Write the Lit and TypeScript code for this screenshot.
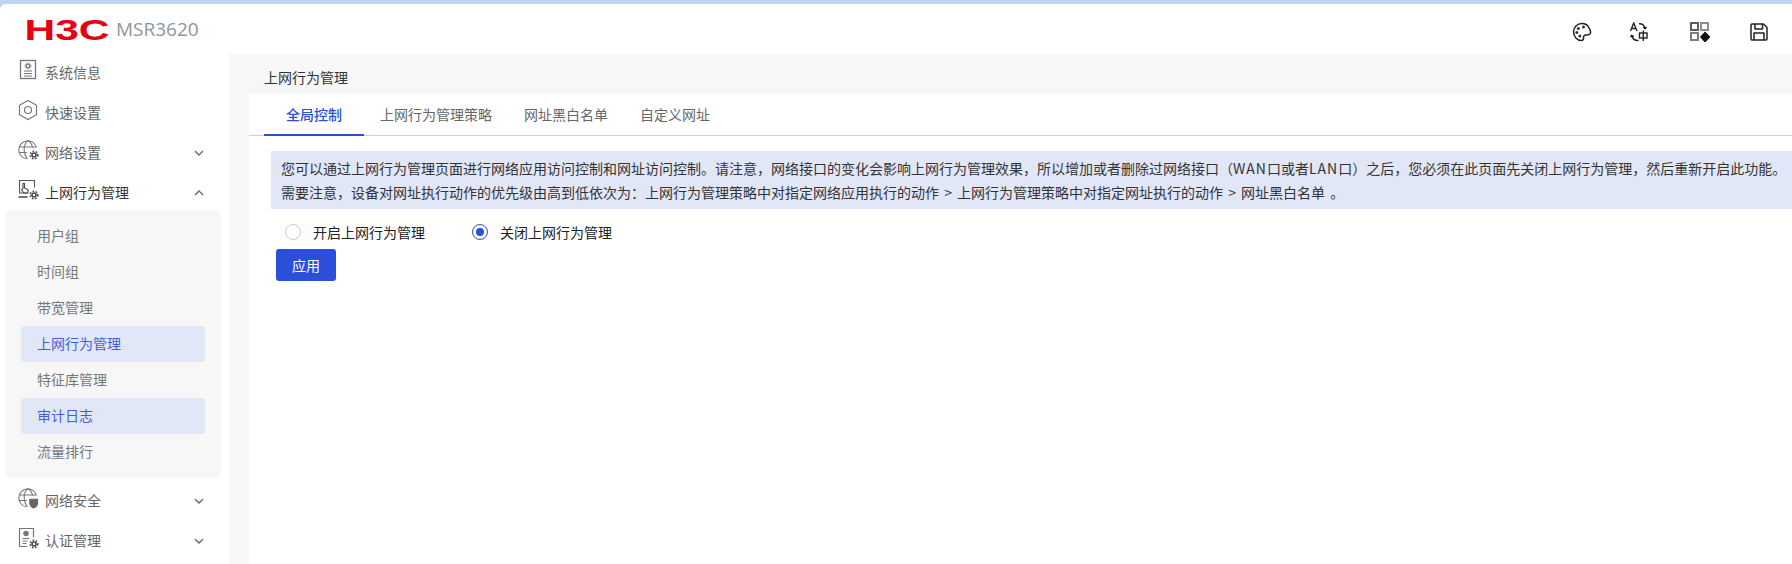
import { LitElement, html, css, svg } from "lit";
import { customElement } from "lit/decorators.js";

const gear = (x: number, y: number, r = 3.4) => svg`
  <circle cx=${x} cy=${y} r=${r} fill="none" stroke="#444" stroke-width="1.6"/>
  <circle cx=${x} cy=${y} r=${r + 1.8} fill="none" stroke="#444" stroke-width="1.5" stroke-dasharray="1.6 1.6"/>
`;

const icons: Record<string, unknown> = {
  info: svg`<svg class="ico" viewBox="0 0 22 22" fill="none" stroke="#777" stroke-width="1.3">
    <rect x="3.5" y="1.5" width="15" height="18"/>
    <circle cx="11" cy="7" r="1.8"/><circle cx="11" cy="7" r="3" stroke-width="1" stroke-dasharray="1.2 1.2"/>
    <path d="M7 12h8M7 14.5h8M7 17h8" stroke-width="1"/></svg>`,
  hex: svg`<svg class="ico" viewBox="0 0 22 22" fill="none" stroke="#777" stroke-width="1.2">
    <path d="M11 1.500l8.500 4.800v9.400L11 20.500l-8.500-4.800V6.300z"/><circle cx="11" cy="11" r="3.500"/></svg>`,
  globe: svg`<svg class="ico" viewBox="0 0 22 22" fill="none" stroke="#777" stroke-width="1.1">
    <path d="M19.500 8.500A9 9 0 1 0 9.500 19.800"/><path d="M11 1.600c-5 4-5 13 -.5 18M11 1.600c2.800 2 4.200 4.500 4.500 7"/><path d="M2 8h17M2 13.500h8"/>
    ${gear(17, 16, 2)}</svg>`,
  hand: svg`<svg class="ico" viewBox="0 0 22 22" fill="none" stroke="#444" stroke-width="1.1">
    <path d="M10 14H2.500V1.500h15v7" stroke="#555"/><path d="M1.500 18h9" stroke-width="1.300"/>
    <path d="M6 4.500v5l-1.500 1.500 2.500 3h4v-3.500l-3.500-1.500v-4.500z"/>
    ${gear(17, 16, 2)}</svg>`,
  shield: svg`<svg class="ico" viewBox="0 0 22 22" fill="none" stroke="#777" stroke-width="1.1">
    <path d="M19.500 8.500A9 9 0 1 0 9.500 19.800"/><path d="M11 1.600c-5 4-5 13 -.5 18M11 1.600c2.800 2 4.200 4.500 4.500 7"/><path d="M2 8h17M2 13.500h8"/>
    <path d="M12.800 12.200h7.700v4c0 2.500-2 4-3.850 4.800-1.850-.8-3.850-2.300-3.850-4.800z" fill="#666" stroke="#666"/></svg>`,
  cert: svg`<svg class="ico" viewBox="0 0 22 22" fill="none" stroke="#777" stroke-width="1.200">
    <path d="M10 19.500H2.500V1.500h14v9"/><circle cx="9" cy="6.500" r="2.200" fill="#777"/>
    <path d="M5.500 11.500h7M5.500 14h5M5.500 16.500h4" stroke-width="1"/>
    ${gear(17, 17, 2)}</svg>`,
  palette: svg`<svg class="tool" viewBox="0 0 20 20" fill="none" stroke="#222" stroke-width="1.5">
    <path d="M10 1.500c-5 0-8.500 3.700-8.500 8.300 0 4.700 3.800 8.700 7.700 8.700 2 0 2.400-1.200 2.300-2.400-.2-1.700.6-3.200 2.400-3.200 1.700 0 3.300.3 4.300-1.200.8-1.200.3-3.500-1.300-6.100C15.500 3 13 1.500 10 1.500z"/>
    <circle cx="6.300" cy="6.500" r="1.500" fill="#333" stroke="none"/><circle cx="11.500" cy="5" r="1.500" fill="#333" stroke="none"/><circle cx="4.800" cy="10.500" r="1.500" fill="#333" stroke="none"/><circle cx="7.800" cy="14" r="1.500" fill="#333" stroke="none"/></svg>`,
  lang: svg`<svg class="tool lang" viewBox="0 0 20 20" fill="none" stroke="#222" stroke-width="1.400">
    <path d="M1.500 9L4.700 1 8 9M2.700 6.500h4"/>
    <path d="M10 1.800c3 -.2 5.300 1.700 6 4.700M14.300 5.300l1.700 1.500 1.500-1.800"/>
    <path d="M9.500 18.500c-3.500.2-6-1.800-6.700-5M4.800 14.700l-2-1.500-1.300 1.800"/>
    <rect x="10.500" y="11" width="7.500" height="5"/><path d="M14.250 8.500v10.500"/></svg>`,
  grid: svg`<svg class="tool" viewBox="0 0 20 20" fill="none" stroke="#555" stroke-width="1.900">
    <rect x="1" y="1" width="7" height="7"/><rect x="11" y="1" width="7" height="7" stroke="#888"/><rect x="1" y="11" width="7" height="7" stroke="#777"/>
    <path d="M15 10.500l4.500 4.500-4.500 4.500-4-4.500z" fill="#111" stroke="#111" stroke-width="1.500"/></svg>`,
  save: svg`<svg class="tool" viewBox="0 0 20 20" fill="none" stroke="#222" stroke-width="1.500" stroke-linejoin="round">
    <path d="M2 3q0-1 1-1h11.500L18 5.500V17q0 1-1 1H3q-1 0-1-1z"/><path d="M6 2v5h7.500V2M5 18v-7h10v7"/></svg>`,
};

const chevron = (up: boolean) => svg`<svg class="chev" viewBox="0 0 10 6" fill="none" stroke="#666" stroke-width="1.300">
  <path d=${up ? "M1 5l4-4 4 4" : "M1 1l4 4 4-4"}/></svg>`;

const subs = [
  { t: "用户组" },
  { t: "时间组" },
  { t: "带宽管理" },
  { t: "上网行为管理", on: true },
  { t: "特征库管理" },
  { t: "审计日志", on: true },
  { t: "流量排行" },
];

@customElement("app-root")
export class AppRoot extends LitElement {
  static styles = css`
    :host {
      display: block;
      width: 1792px;
      height: 564px;
      overflow: hidden;
      background: #bcd5f2;
      padding-top: 4px;
      box-sizing: border-box;
      font-family: "Noto Sans CJK SC", "Liberation Sans", sans-serif;
      font-size: 14px;
      color: #333;
    }
    .app {
      height: 560px;
      background: #fff;
      border-top-left-radius: 6px;
      display: flex;
      flex-direction: column;
      overflow: hidden;
    }
    header {
      height: 50px;
      flex: none;
      display: flex;
      align-items: center;
      padding-left: 26px;
    }
    .logo { display: block; width: 84px; height: 24px; overflow: visible; flex: none; }
    .model {
      font-family: "Open Sans", "Liberation Sans", sans-serif;
      font-size: 19px;
      color: #8b95a1;
      margin-left: 6px;
    }
    .tools {
      margin-left: auto;
      display: flex;
      gap: 39px;
      padding: 5px 23px 0 0;
      align-items: center;
    }
    .tool { width: 20px; height: 20px; display: block; }
    .tool.lang { margin: 0 2px 0 -2px; }
    .body { flex: 1; display: flex; min-height: 0; }
    aside { width: 229px; flex: none; margin-top: -4px; }
    .item {
      height: 40px;
      display: flex;
      align-items: center;
      padding: 0 25px 0 17px;
      gap: 6px;
      color: #666;
      line-height: 20px;
    }
    .item.open { color: #333; }
    .item span { flex: 1; padding-top: 3px; }
    .ico { width: 22px; height: 22px; display: block; }
    .chev { width: 10px; height: 6px; display: block; margin-top: 6px; }
    .panel {
      margin: 0 8px 0 5px;
      width: 216px;
      height: 268px;
      box-sizing: border-box;
      background: #f7f7f7;
      border-radius: 4px;
      padding: 8px 16px 0;
    }
    .sub {
      height: 36px;
      line-height: 35px;
      padding-left: 16px;
      color: #777;
      border-radius: 3px;
    }
    .sub.on { background: #e2e7f8; color: #3f5fdc; }
    main {
      flex: 1;
      min-width: 0;
      background: #f7f7f7;
      padding-left: 20px;
      display: flex;
      flex-direction: column;
    }
    .crumb { height: 40px; line-height: 46px; padding-left: 15px; color: #333; }
    .page { flex: 1; background: #fff; }
    .tabs {
      display: flex;
      height: 41px;
      border-bottom: 1px solid #d0d0d0;
      padding-left: 15px;
    }
    .tab {
      padding: 0 16px;
      line-height: 41px;
      height: 41px;
      color: #666;
      white-space: nowrap;
      box-sizing: border-box;
    }
    .tab.on {
      padding: 0 22px;
      color: #2b4fd8;
      font-weight: 500;
      border-bottom: 2px solid #2b4fd8;
      height: 42px;
    }
    .content { padding: 15px 0 0 22px; }
    .notice {
      background: #e2e7f8;
      padding: 5px 0 5px 10px;
      height: 58px;
      box-sizing: border-box;
      line-height: 24px;
      white-space: nowrap;
      color: #333;
      overflow: hidden;
      word-spacing: 2px;
    }
    .latin { letter-spacing: 1px; }
    .radios {
      display: flex;
      height: 40px;
      align-items: center;
      padding: 6px 0 0 14px;
      color: #222;
      box-sizing: border-box;
    }
    .radio { display: flex; align-items: center; gap: 12px; margin-right: 47px; }
    .dot {
      width: 16px;
      height: 16px;
      border-radius: 50%;
      border: 1px solid #ccc;
      box-sizing: border-box;
      background: #fff;
      display: flex;
      align-items: center;
      justify-content: center;
    }
    .dot.on { border-color: #2b4fd8; }
    .dot.on::after {
      content: "";
      width: 8px;
      height: 8px;
      border-radius: 50%;
      background: #2b4fd8;
    }
    button {
      display: block;
      margin-left: 5px;
      width: 60px;
      height: 32px;
      background: #2b4fd8;
      color: #fff;
      border: 0;
      border-radius: 3px;
      font: inherit;
      padding: 0;
    }
  `;

  render() {
    const item = (icon: string, t: string, chev?: "up" | "down", open = false) => html`
      <div class="item ${open ? "open" : ""}">
        ${icons[icon]}<span>${t}</span>${chev ? chevron(chev === "up") : ""}
      </div>`;
    return html`
      <div class="app">
        <header>
          <svg class="logo" viewBox="0 0 84 24">
            <text x="-1.500" y="22.500" font-family="Liberation Sans" font-weight="700" font-size="30" fill="#e60012"
              textLength="85" lengthAdjust="spacingAndGlyphs">H3C</text>
          </svg>
          <span class="model">MSR3620</span>
          <div class="tools">${icons.palette}${icons.lang}${icons.grid}${icons.save}</div>
        </header>
        <div class="body">
          <aside>
            ${item("info", "系统信息")}
            ${item("hex", "快速设置")}
            ${item("globe", "网络设置", "down")}
            ${item("hand", "上网行为管理", "up", true)}
            <div class="panel">
              ${subs.map((s) => html`<div class="sub ${s.on ? "on" : ""}">${s.t}</div>`)}
            </div>
            ${item("shield", "网络安全", "down")}
            ${item("cert", "认证管理", "down")}
          </aside>
          <main>
            <div class="crumb">上网行为管理</div>
            <div class="page">
              <div class="tabs">
                <div class="tab on">全局控制</div>
                <div class="tab">上网行为管理策略</div>
                <div class="tab">网址黑白名单</div>
                <div class="tab">自定义网址</div>
              </div>
              <div class="content">
                <div class="notice">
                  您可以通过上网行为管理页面进行网络应用访问控制和网址访问控制。请注意，网络接口的变化会影响上网行为管理效果，所以增加或者删除过网络接口（<span class="latin">WAN</span>口或者<span class="latin">LAN</span>口）之后，您必须在此页面先关闭上网行为管理，然后重新开启此功能。<br />
                  需要注意，设备对网址执行动作的优先级由高到低依次为：上网行为管理策略中对指定网络应用执行的动作 > 上网行为管理策略中对指定网址执行的动作 > 网址黑白名单 。
                </div>
                <div class="radios">
                  <label class="radio"><i class="dot"></i>开启上网行为管理</label>
                  <label class="radio"><i class="dot on"></i>关闭上网行为管理</label>
                </div>
                <button>应用</button>
              </div>
            </div>
          </main>
        </div>
      </div>
    `;
  }
}
